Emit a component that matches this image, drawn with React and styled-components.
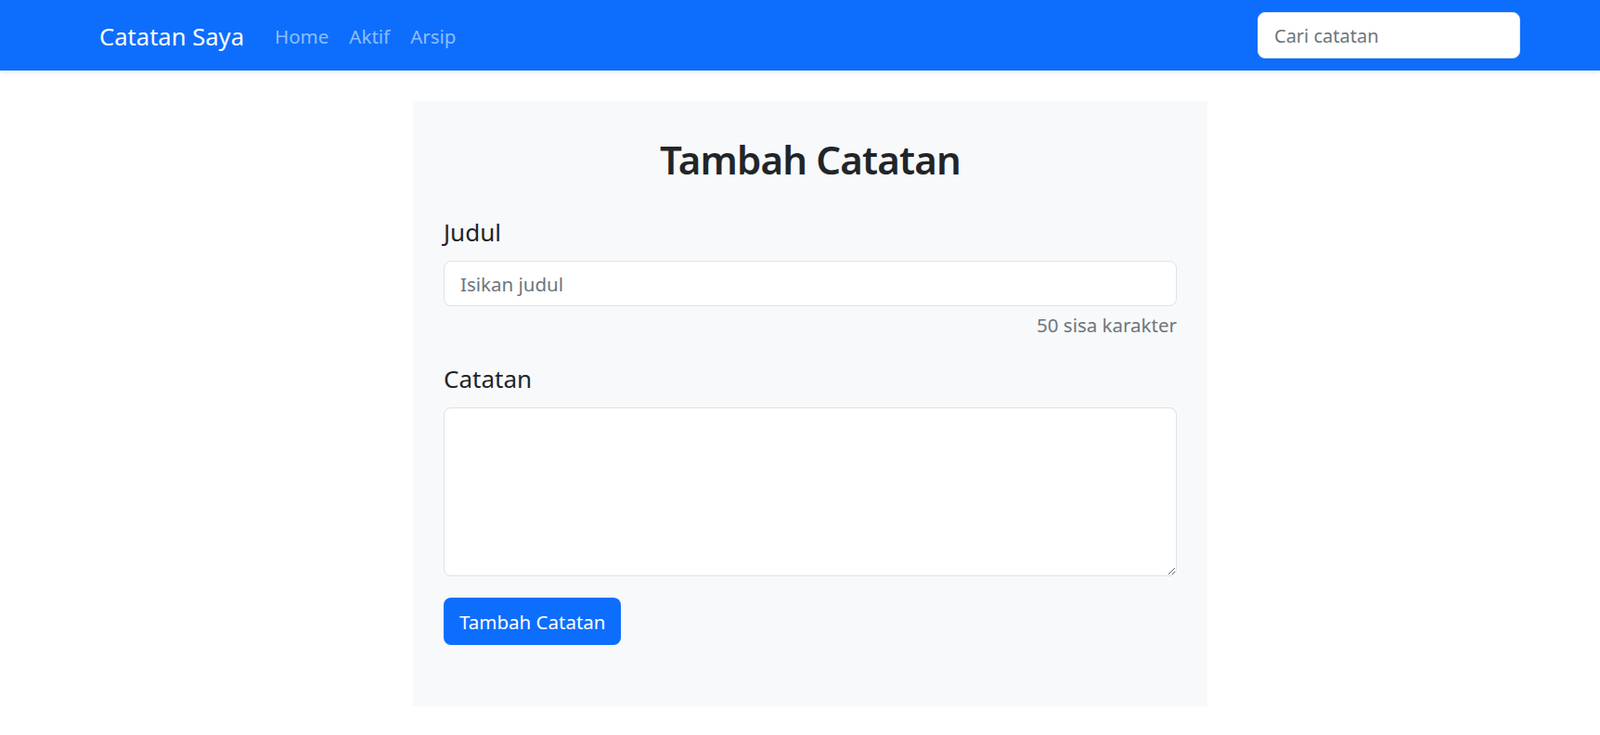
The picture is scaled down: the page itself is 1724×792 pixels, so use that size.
import styled, { createGlobalStyle } from "styled-components";
import { useState } from "react";

const GlobalStyle = createGlobalStyle`
	body {
		margin: 0;
		background: #fff;
		font-family: "Noto Sans", "Open Sans", sans-serif;
		color: #212529;
	}
	* {
		box-sizing: border-box;
	}
`;

const Navbar = styled.nav`
	display: flex;
	align-items: center;
	height: 76px;
	padding: 0 86px 0 107px;
	background: #0d6efd;
	box-shadow: 0 2px 6px rgba(0, 0, 0, 0.08);
`;

const Brand = styled.a`
	margin: 2px 33px 0 0;
	font-size: 25.6px;
	color: #fff;
	text-decoration: none;
`;

const NavLinks = styled.div`
	display: flex;
	gap: 22px;
	flex: 1;
	margin-top: 2px;
`;

const NavLink = styled.a`
	font-size: 20.5px;
	color: rgba(255, 255, 255, 0.55);
	text-decoration: none;
`;

const SearchInput = styled.input`
	width: 283px;
	height: 50px;
	padding: 0 17px;
	border: 1px solid #dee2e6;
	border-radius: 8px;
	font-family: inherit;
	font-size: 20px;
	color: #212529;
	outline: none;

	&::placeholder {
		color: #6c757d;
	}
`;

const Main = styled.main`
	display: flex;
	justify-content: center;
	padding: 33px 0 0 22px;
`;

const Card = styled.form`
	width: 856px;
	height: 652px;
	padding: 33px 33px 0;
	background: #f8f9fa;

	h2 {
		margin: 0 0 31px;
		text-align: center;
		font-size: 42px;
		font-weight: 600;
		letter-spacing: -0.8px;
		line-height: 60px;
	}
`;

const Field = styled.div`
	margin-bottom: ${(p) => p.gap || 0}px;
`;

const Label = styled.label`
	display: block;
	margin-bottom: 14px;
	font-size: 26px;
	line-height: 34px;
`;

const TextInput = styled.input`
	display: block;
	width: 100%;
	height: 49px;
	padding: 0 17px;
	background: #fff;
	border: 1px solid #dee2e6;
	border-radius: 8px;
	font-family: inherit;
	font-size: 20.5px;
	color: #212529;
	outline: none;

	&::placeholder {
		color: #6c757d;
	}
`;

const Counter = styled.p`
	margin: 5px 0 0;
	text-align: right;
	font-size: 20.5px;
	line-height: 30px;
	color: #6c757d;
`;

const TextArea = styled.textarea`
	display: block;
	width: 100%;
	height: 182px;
	padding: 10px 17px;
	background: #fff;
	border: 1px solid #dee2e6;
	border-radius: 8px;
	font-family: inherit;
	font-size: 20px;
	outline: none;
	resize: vertical;
`;

const SubmitBtn = styled.button`
	height: 51px;
	padding: 0 17px;
	background: #0d6efd;
	border: 0 none;
	border-radius: 8px;
	font-family: inherit;
	font-size: 20.5px;
	color: #fff;
	cursor: pointer;
`;

const App = () => {
	const [title, setTitle] = useState("");
	const [body, setBody] = useState("");

	return (
		<>
			<GlobalStyle />
			<Navbar>
				<Brand href="#">Catatan Saya</Brand>
				<NavLinks>
					<NavLink href="#">Home</NavLink>
					<NavLink href="#">Aktif</NavLink>
					<NavLink href="#">Arsip</NavLink>
				</NavLinks>
				<SearchInput type="text" placeholder="Cari catatan" />
			</Navbar>
			<Main>
				<Card onSubmit={(e) => e.preventDefault()}>
					<h2>Tambah Catatan</h2>
					<Field gap={26}>
						<Label htmlFor="judul">Judul</Label>
						<TextInput
							id="judul"
							placeholder="Isikan judul"
							maxLength={50}
							value={title}
							onChange={(e) => setTitle(e.currentTarget.value)}
						/>
						<Counter>{50 - title.length} sisa karakter</Counter>
					</Field>
					<Field gap={23}>
						<Label htmlFor="catatan">Catatan</Label>
						<TextArea
							id="catatan"
							value={body}
							onChange={(e) => setBody(e.currentTarget.value)}
						/>
					</Field>
					<SubmitBtn type="submit">Tambah Catatan</SubmitBtn>
				</Card>
			</Main>
		</>
	);
};

export default App;
